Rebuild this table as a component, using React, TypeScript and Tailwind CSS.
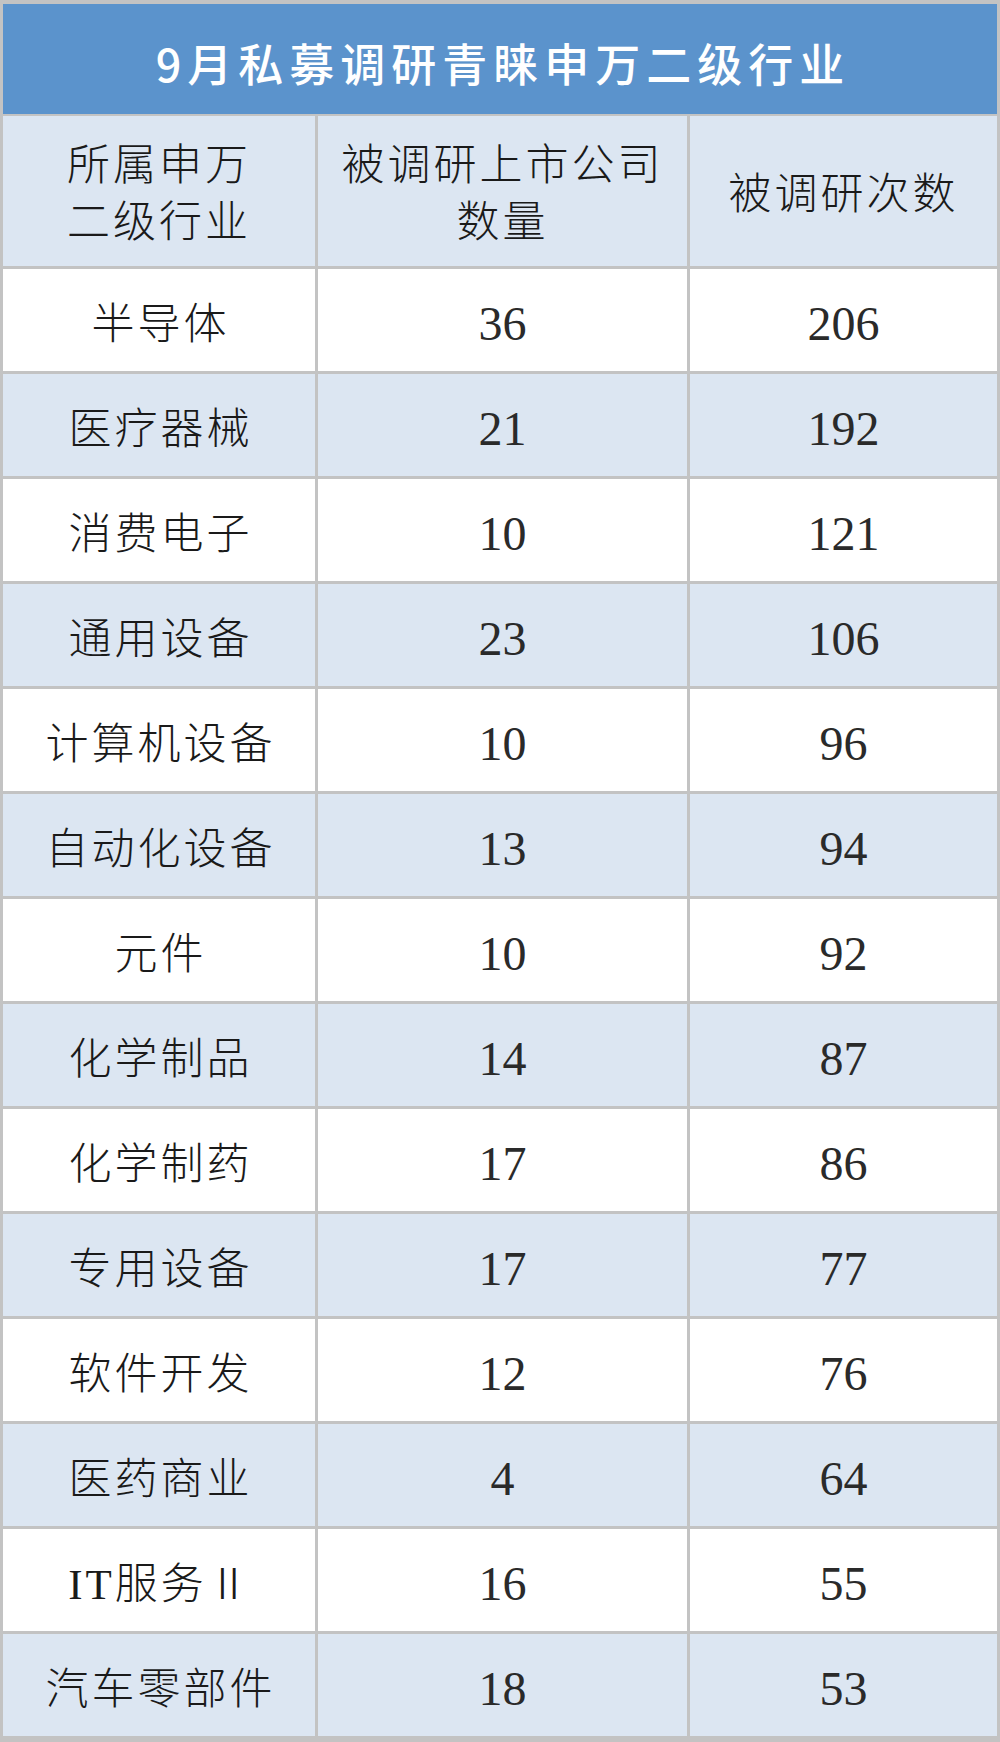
import React from 'react';

const rows: [string, number, number][] = [
  ['半导体', 36, 206],
  ['医疗器械', 21, 192],
  ['消费电子', 10, 121],
  ['通用设备', 23, 106],
  ['计算机设备', 10, 96],
  ['自动化设备', 13, 94],
  ['元件', 10, 92],
  ['化学制品', 14, 87],
  ['化学制药', 17, 86],
  ['专用设备', 17, 77],
  ['软件开发', 12, 76],
  ['医药商业', 4, 64],
  ['IT服务Ⅱ', 16, 55],
  ['汽车零部件', 18, 53],
];

const cjk = "font-['Liberation_Serif','Noto_Sans_CJK_SC',serif]";

const App: React.FC = () => {
  return (
    <div className="w-[1000px] h-[1742px] bg-[#c3c3c3] px-[3px] pt-[4px] pb-[4px]">
      <div className="grid grid-cols-[312px_369px_307px] gap-[3px] grid-rows-[109px_150px_repeat(14,102px)]">
        {/* Title */}
        <div className="col-span-3 -mb-px bg-[#5b93cc] flex items-center justify-center pt-[6px]">
          <span className="font-['Noto_Sans_CJK_SC',sans-serif] font-medium text-white text-[45px] tracking-[6px] pl-[6px] leading-none">
            9月私募调研青睐申万二级行业
          </span>
        </div>

        {/* Header */}
        <div className={`bg-[#dce6f2] flex items-center justify-center text-center text-[43px] leading-[57px] tracking-[3px] text-[#1a1a1a] font-light ${cjk}`}>
          <div className="pt-[6px]">所属申万<br />二级行业</div>
        </div>
        <div className={`bg-[#dce6f2] flex items-center justify-center text-center text-[43px] leading-[57px] tracking-[3px] text-[#1a1a1a] font-light ${cjk}`}>
          <div className="pt-[6px]">被调研上市公司<br />数量</div>
        </div>
        <div className={`bg-[#dce6f2] flex items-center justify-center text-center text-[43px] leading-[57px] tracking-[3px] text-[#1a1a1a] font-light ${cjk}`}>
          <div className="pt-[6px]">被调研次数</div>
        </div>

        {/* Data rows */}
        {rows.map(([name, companies, visits], i) => {
          const bg = i % 2 === 0 ? 'bg-white' : 'bg-[#dce6f2]';
          return (
            <React.Fragment key={name}>
              <div className={`${bg} flex items-center justify-center pt-[8px]`}>
                <span className={`text-[43px] leading-none tracking-[3px] pl-[3px] text-[#1a1a1a] font-light ${cjk}`}>{name}</span>
              </div>
              <div className={`${bg} flex items-center justify-center pt-[8px]`}>
                <span className="font-['Liberation_Serif',serif] text-[48px] leading-none text-[#2a2a2a]">{companies}</span>
              </div>
              <div className={`${bg} flex items-center justify-center pt-[8px]`}>
                <span className="font-['Liberation_Serif',serif] text-[48px] leading-none text-[#2a2a2a]">{visits}</span>
              </div>
            </React.Fragment>
          );
        })}
      </div>
    </div>
  );
};

export default App;
